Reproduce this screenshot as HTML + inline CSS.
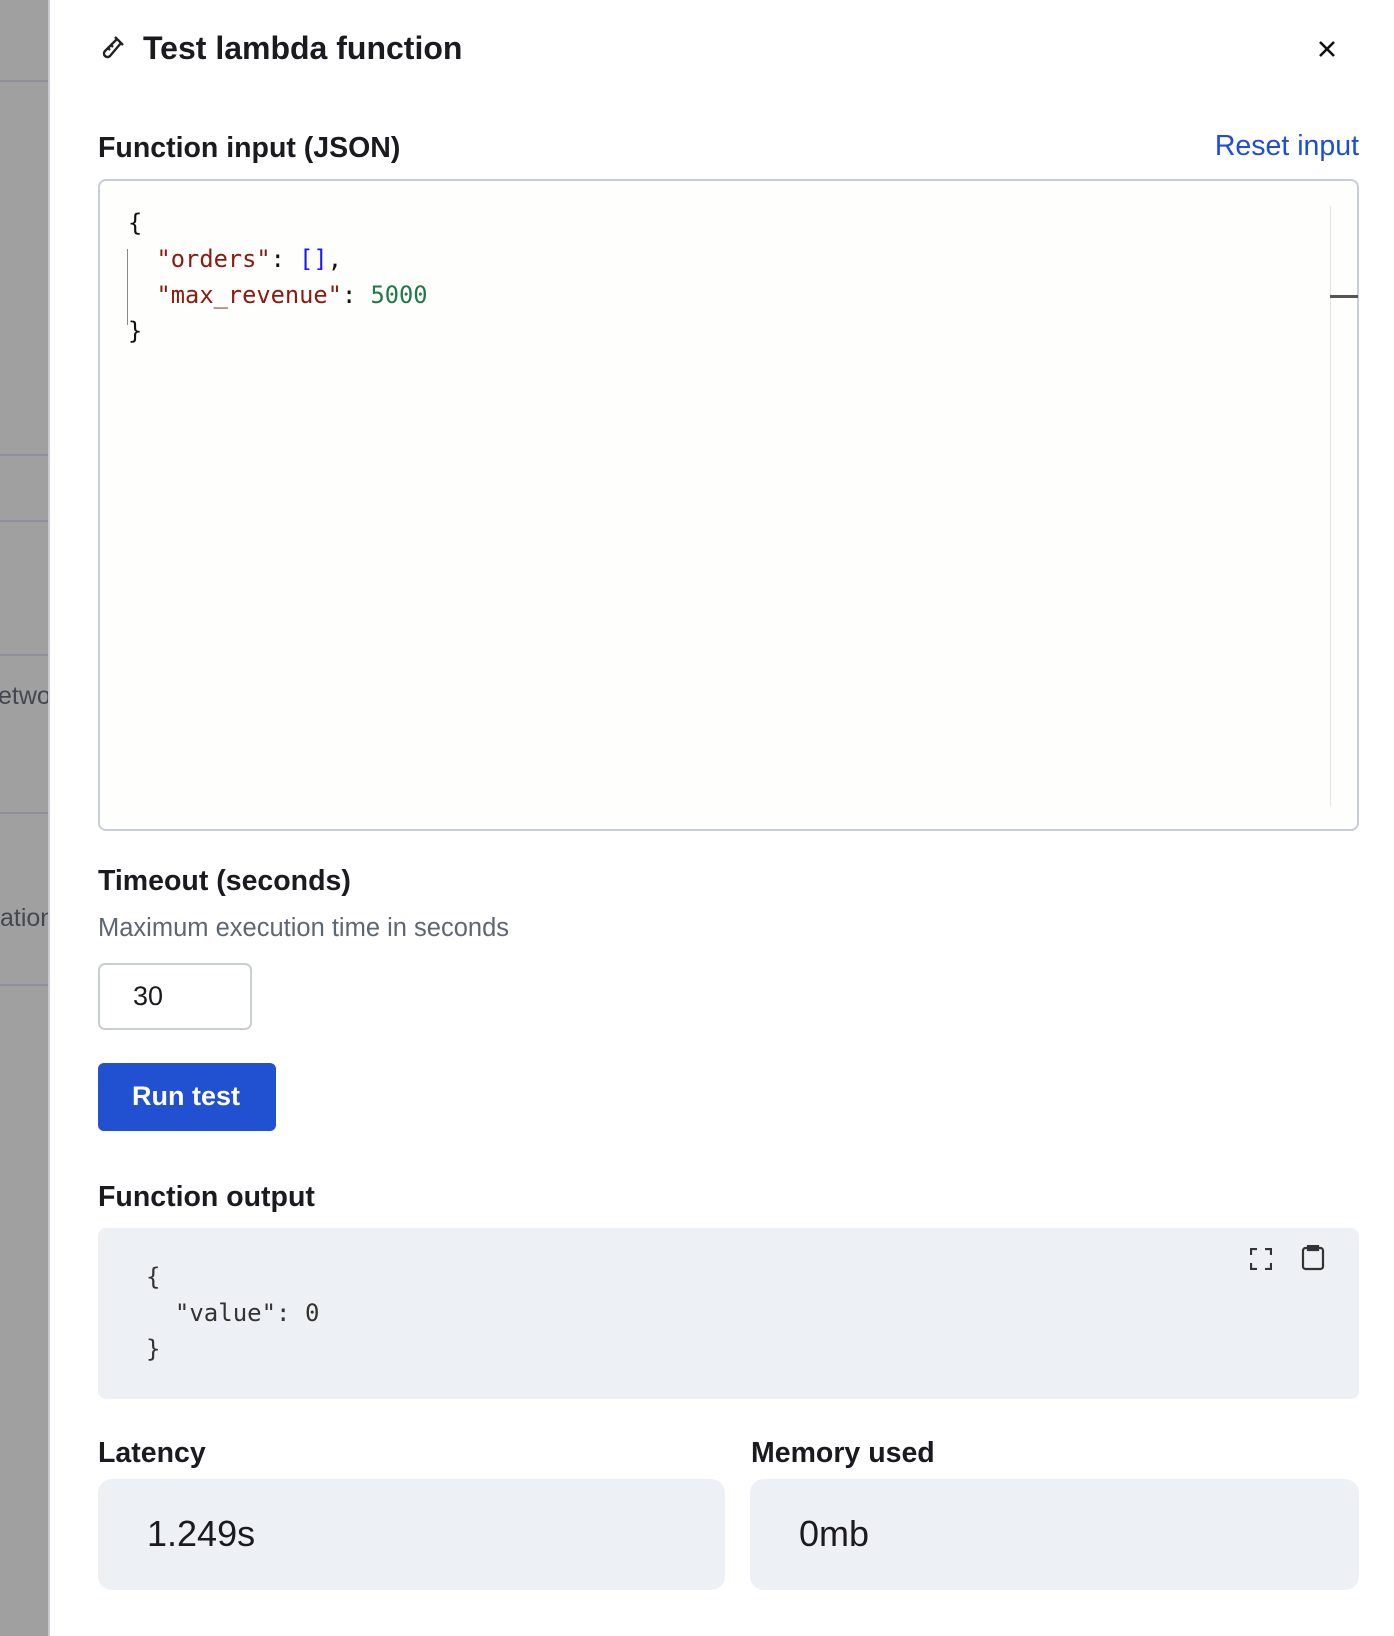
<!DOCTYPE html>
<html><head><meta charset="utf-8"><style>
*{box-sizing:border-box;margin:0;padding:0}
body{width:1394px;height:1636px;position:relative;background:#fff;font-family:"Liberation Sans",sans-serif;color:#1a1a1f;overflow:hidden}
.ov{position:absolute;left:0;top:0;width:50px;height:1636px;background:#a0a0a0;border-right:2px solid #c9ccd6}
.ov .l{position:absolute;left:0;width:48px;height:2px;background:#8e9098}
.ov .t{position:absolute;font-size:25px;color:#44474f;white-space:nowrap;overflow:hidden;width:48px}
.a{position:absolute;white-space:nowrap}
.lbl{font-size:28.5px;font-weight:bold}
.mono{font-family:"DejaVu Sans Mono","Liberation Mono",monospace}
</style></head><body>
<div class="ov">
<div class="l" style="top:80px"></div><div class="l" style="top:454px"></div><div class="l" style="top:520px"></div><div class="l" style="top:654px"></div><div class="l" style="top:812px"></div><div class="l" style="top:984px"></div>
<div class="t" style="top:682px;left:0"><span style="margin-left:-2px">etwo</span></div>
<div class="t" style="top:904px;left:0"><span>ation</span></div>
</div>
<svg class="a" style="left:98px;top:34px" width="28" height="28" viewBox="0 0 28 28" fill="none" stroke="#222" stroke-width="2.4" stroke-linejoin="round"><path d="M17 3 L25 11 M19 5 L7 17 a3.5 3.5 0 0 0 5 5 L23 9"/><path d="M10 14 l2 2 M13 11 l2 2" /></svg>
<div class="a" style="left:143px;top:30px;font-size:32px;font-weight:bold">Test lambda function</div>
<svg class="a" style="left:1318px;top:40px" width="18" height="18" viewBox="0 0 18 18" stroke="#111" stroke-width="2.6"><path d="M2 2L16 16M16 2L2 16"/></svg>
<div class="a lbl" style="left:98px;top:132px">Function input (JSON)</div>
<div class="a" style="right:35px;top:130px;font-size:28.5px;color:#1d4ed8">Reset input</div>
<div class="a" style="left:98px;top:179px;width:1261px;height:652px;border:2px solid #c9cdd8;border-radius:8px;background:#fefefc">
 <div class="a" style="left:1230px;top:25px;width:28px;height:600px;border-left:1px solid #e2e4e8"></div>
 <div class="a" style="left:1230px;top:114px;width:28px;height:3px;background:#555"></div>
 <div class="a" style="left:27px;top:68px;width:1px;height:76px;background:#888"></div>
 <div class="a mono" style="left:28px;top:24px;font-size:23.7px;line-height:36px;color:#111">{<br>&nbsp;&nbsp;<span style="color:#8b1a10">"orders"</span>: <span style="color:#1a1aff">[]</span>,<br>&nbsp;&nbsp;<span style="color:#8b1a10">"max_revenue"</span>: <span style="color:#1f7a4a">5000</span><br>}</div>
</div>
<div class="a lbl" style="left:98px;top:865px">Timeout (seconds)</div>
<div class="a" style="left:98px;top:914px;font-size:25.5px;color:#5f6673">Maximum execution time in seconds</div>
<div class="a" style="left:98px;top:963px;width:154px;height:67px;border:2px solid #c9cdd8;border-radius:7px;font-size:27px;padding:16px 0 0 33px">30</div>
<div class="a" style="left:98px;top:1063px;width:178px;height:68px;background:#2150d0;border-radius:6px;color:#fff;font-size:27px;font-weight:bold;padding:18px 0 0 34px">Run test</div>
<div class="a lbl" style="left:98px;top:1181px">Function output</div>
<div class="a" style="left:98px;top:1228px;width:1261px;height:171px;background:#edf0f4;border-radius:8px">
 <div class="a mono" style="left:48px;top:31px;font-size:24px;line-height:36px;color:#333">{<br>&nbsp;&nbsp;"value": 0<br>}</div>
 <svg class="a" style="left:1152px;top:20px" width="22" height="22" viewBox="0 0 22 22" fill="none" stroke="#333" stroke-width="2.2"><path d="M1 7V1H7M15 1H21V7M21 15V21H15M7 21H1V15"/></svg>
 <svg class="a" style="left:1203px;top:17px" width="24" height="26" viewBox="0 0 24 26" fill="none" stroke="#333" stroke-width="2.2"><rect x="2" y="3" width="20" height="21" rx="2.5"/><rect x="7" y="1" width="10" height="4" fill="#333"/></svg>
</div>
<div class="a lbl" style="left:98px;top:1437px">Latency</div>
<div class="a lbl" style="left:751px;top:1437px">Memory used</div>
<div class="a" style="left:98px;top:1479px;width:627px;height:111px;background:#edf0f4;border-radius:14px;font-size:36px;padding:34px 0 0 49px">1.249s</div>
<div class="a" style="left:750px;top:1479px;width:609px;height:111px;background:#edf0f4;border-radius:14px;font-size:36px;padding:34px 0 0 49px">0mb</div>
</body></html>
